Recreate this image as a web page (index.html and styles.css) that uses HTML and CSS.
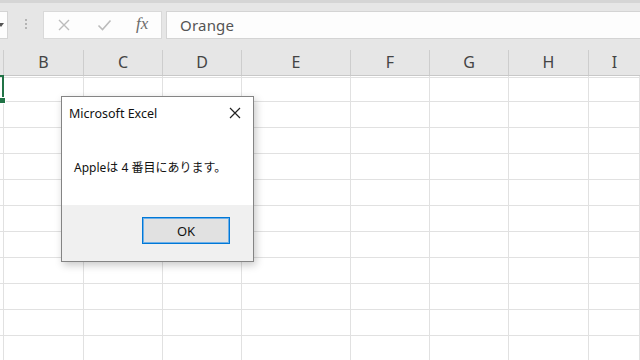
FILE: index.html
```html
<!DOCTYPE html>
<html lang="ja">
<head>
    <meta charset="UTF-8">
    <title>Microsoft Excel</title>
    <link rel="stylesheet" href="styles.css">
</head>
<body>
    <div class="app">
        <div class="ribbon-edge"></div>

        <div class="formula-bar">
            <div class="name-box"><span class="caret"></span></div>
            <div class="grip"><i></i><i></i><i></i></div>
            <div class="fx-buttons">
                <svg class="fx-icon" width="14" height="12" viewBox="0 0 14 12">
                    <path d="M2 1 L12 11 M12 1 L2 11" stroke="#bcbcbc" stroke-width="1.4" fill="none"/>
                </svg>
                <svg class="fx-icon" width="15" height="12" viewBox="0 0 15 12">
                    <path d="M1.5 6.5 L5.5 10.5 L13.5 1.5" stroke="#bcbcbc" stroke-width="1.6" fill="none"/>
                </svg>
                <span class="fx">fx</span>
            </div>
            <div class="formula-input">Orange</div>
        </div>

        <div class="col-headers">
            <div class="col-head col-a"></div>
            <div class="col-head col-b">B</div>
            <div class="col-head col-c">C</div>
            <div class="col-head col-d">D</div>
            <div class="col-head col-e">E</div>
            <div class="col-head col-f">F</div>
            <div class="col-head col-g">G</div>
            <div class="col-head col-h">H</div>
            <div class="col-head col-i">I</div>
        </div>

        <div class="sheet">
            <div class="col col-a"></div>
            <div class="col col-b"></div>
            <div class="col col-c"></div>
            <div class="col col-d"></div>
            <div class="col col-e"></div>
            <div class="col col-f"></div>
            <div class="col col-g"></div>
            <div class="col col-h"></div>
            <div class="col col-i"></div>

            <div class="selection"><span class="fill-handle"></span></div>

            <div class="msgbox">
                <div class="msgbox-title">
                    <span>Microsoft Excel</span>
                    <svg class="close" width="12" height="12" viewBox="0 0 12 12">
                        <path d="M1 1 L11 11 M11 1 L1 11" stroke="#222" stroke-width="1.2" fill="none"/>
                    </svg>
                </div>
                <div class="msgbox-body">Appleは 4 番目にあります。</div>
                <div class="msgbox-footer">
                    <button class="ok">OK</button>
                </div>
            </div>
        </div>
    </div>
</body>
</html>
```

FILE: styles.css
```css
html, body {
    margin: 0;
    padding: 0;
    height: 100%;
    overflow: hidden;
    background: #fff;
    font-family: "Noto Sans", "Noto Sans CJK JP", sans-serif;
}

.app {
    display: flex;
    flex-direction: column;
    height: 100%;
}

.ribbon-edge {
    height: 3px;
    background: #d5d5d5;
}

/* formula bar */

.formula-bar {
    display: flex;
    align-items: flex-start;
    height: 47px;
    padding-top: 8px;
    background: #e6e6e6;
    box-sizing: border-box;
}

.name-box {
    position: relative;
    width: 8px;
    height: 28px;
    background: #fdfdfd;
    border: 1px solid #d4d4d4;
    border-left: none;
    box-sizing: border-box;
}

.caret {
    position: absolute;
    left: -2px;
    top: 11px;
    border-top: 4px solid #555;
    border-left: 3px solid transparent;
    border-right: 3px solid transparent;
}

.grip {
    display: flex;
    flex-direction: column;
    gap: 2px;
    width: 2px;
    margin: 8px 16px 0 17px;
}

.grip i {
    display: block;
    width: 2px;
    height: 2px;
    background: #b4b4b4;
}

.fx-buttons {
    display: flex;
    align-items: center;
    width: 119px;
    height: 28px;
    background: #fdfdfd;
    border: 1px solid #d9d9d9;
    box-sizing: border-box;
    padding-left: 13px;
}

.fx-icon {
    margin-right: 26px;
}

.fx-icon + .fx-icon {
    margin-right: 24px;
}

.fx {
    font-family: "Liberation Serif", serif;
    font-style: italic;
    font-size: 17px;
    color: #6b6b6b;
    margin-top: -2px;
}

.formula-input {
    flex: 1;
    height: 28px;
    margin-left: 4px;
    padding-left: 13px;
    background: #fdfdfd;
    border: 1px solid #d4d4d4;
    border-right: none;
    box-sizing: border-box;
    font-size: 15px;
    letter-spacing: 0.2px;
    line-height: 26px;
    color: #555;
}

/* column headers */

.col-headers {
    display: flex;
    height: 26px;
    background: #e6e6e6;
    border-bottom: 1px solid #c8c8c8;
    box-sizing: border-box;
}

.col-head {
    border-right: 1px solid #cdcdcd;
    box-sizing: border-box;
    text-align: center;
    font-size: 16px;
    line-height: 25px;
    color: #444;
}

.col-a { width: 4px; }
.col-b { width: 80px; }
.col-c { width: 79px; }
.col-d { width: 79px; }
.col-e { width: 109px; }
.col-f { width: 79px; }
.col-g { width: 79px; }
.col-h { width: 80px; }
.col-i { flex: 1; border-right: none; }

/* grid */

.sheet {
    position: relative;
    display: flex;
    flex: 1;
}

.col {
    border-right: 1px solid #e1e1e1;
    box-sizing: border-box;
    background: repeating-linear-gradient(to bottom, #e1e1e1 0 1px, transparent 1px 26px);
    background-position: 0 25px;
}

.selection {
    position: absolute;
    left: -10px;
    top: -1px;
    width: 14px;
    height: 27px;
    border: 2px solid #217346;
    box-sizing: border-box;
}

.fill-handle {
    position: absolute;
    right: -4px;
    bottom: -4px;
    width: 5px;
    height: 5px;
    background: #217346;
    border: 1px solid #fff;
}

/* message box */

.msgbox {
    position: absolute;
    left: 61px;
    top: 20px;
    width: 193px;
    height: 166px;
    display: flex;
    flex-direction: column;
    background: #fff;
    border: 1px solid #848484;
    box-sizing: border-box;
    box-shadow: 2px 3px 8px rgba(0, 0, 0, 0.22);
}

.msgbox-title {
    display: flex;
    align-items: center;
    justify-content: space-between;
    height: 32px;
    padding: 0 12px 0 7px;
    font-size: 12.5px;
    color: #111;
}

.close {
    margin-top: -1px;
}

.msgbox-body {
    flex: 1;
    display: flex;
    align-items: center;
    padding-left: 12px;
    font-size: 12px;
    color: #111;
}

.msgbox-footer {
    display: flex;
    justify-content: flex-end;
    height: 56px;
    padding: 12px 23px 0 0;
    box-sizing: border-box;
    background: #f0f0f0;
}

.ok {
    width: 88px;
    height: 27px;
    background: #e1e1e1;
    border: 1px solid #0078d7;
    box-shadow: inset 0 0 0 1px #6fb0e8;
    font-family: "Noto Sans", sans-serif;
    font-size: 13px;
    color: #111;
    padding: 0;
}
```
